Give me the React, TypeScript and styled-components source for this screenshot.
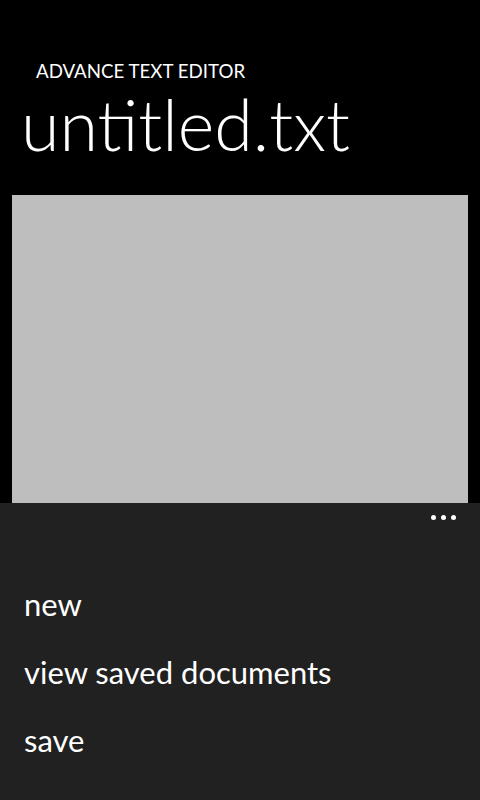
import { createGlobalStyle } from "styled-components";
import styled from "styled-components";

const GlobalStyle = createGlobalStyle`
  html, body {
    margin: 0;
    padding: 0;
    background: #000;
  }
  * {
    box-sizing: border-box;
  }
`;

export default function App() {
  const menu = ["new", "view saved documents", "save"];

  return (
    <Page>
      <GlobalStyle />
      <Header>
        <AppTitle>ADVANCE TEXT EDITOR</AppTitle>
        <PageTitle>untitled.txt</PageTitle>
      </Header>
      <Editor spellCheck={false} />
      <AppBar>
        <DotsRow>
          <Dots aria-label="more">
            <Dot />
            <Dot />
            <Dot />
          </Dots>
        </DotsRow>
        <Menu>
          {menu.map((item) => (
            <MenuItem key={item}>{item}</MenuItem>
          ))}
        </Menu>
      </AppBar>
    </Page>
  );
}

const Page = styled.div`
  width: 480px;
  height: 800px;
  background: #000;
  color: #fff;
  display: flex;
  flex-direction: column;
  font-family: "Lato", "Open Sans", sans-serif;
  overflow: hidden;
`;

const Header = styled.div`
  display: flex;
  flex-direction: column;
  padding-top: 60px;
  height: 195px;
`;

const AppTitle = styled.div`
  margin-left: 36px;
  font-size: 18.7px;
  line-height: 1.2;
  font-weight: 400;
`;

const PageTitle = styled.div`
  margin: 0 0 0 21px;
  font-size: 70px;
  line-height: 1.2;
  font-weight: 300;
`;

const Editor = styled.textarea`
  display: block;
  margin: 0 12px;
  width: 456px;
  height: 308px;
  flex-shrink: 0;
  background: #bebebe;
  border: none;
  outline: none;
  resize: none;
  padding: 0;
`;

const AppBar = styled.div`
  flex: 1;
  background: #212121;
  display: flex;
  flex-direction: column;
`;

const DotsRow = styled.div`
  display: flex;
  justify-content: flex-end;
  padding: 12px 24px 0 0;
`;

const Dots = styled.div`
  display: flex;
  gap: 5px;
`;

const Dot = styled.span`
  width: 5px;
  height: 5px;
  border-radius: 50%;
  background: #fff;
`;

const Menu = styled.div`
  display: flex;
  flex-direction: column;
  padding: 50px 0 0 24px;
`;

const MenuItem = styled.div`
  font-size: 31px;
  line-height: 68px;
  height: 68px;
  font-weight: 400;
`;
